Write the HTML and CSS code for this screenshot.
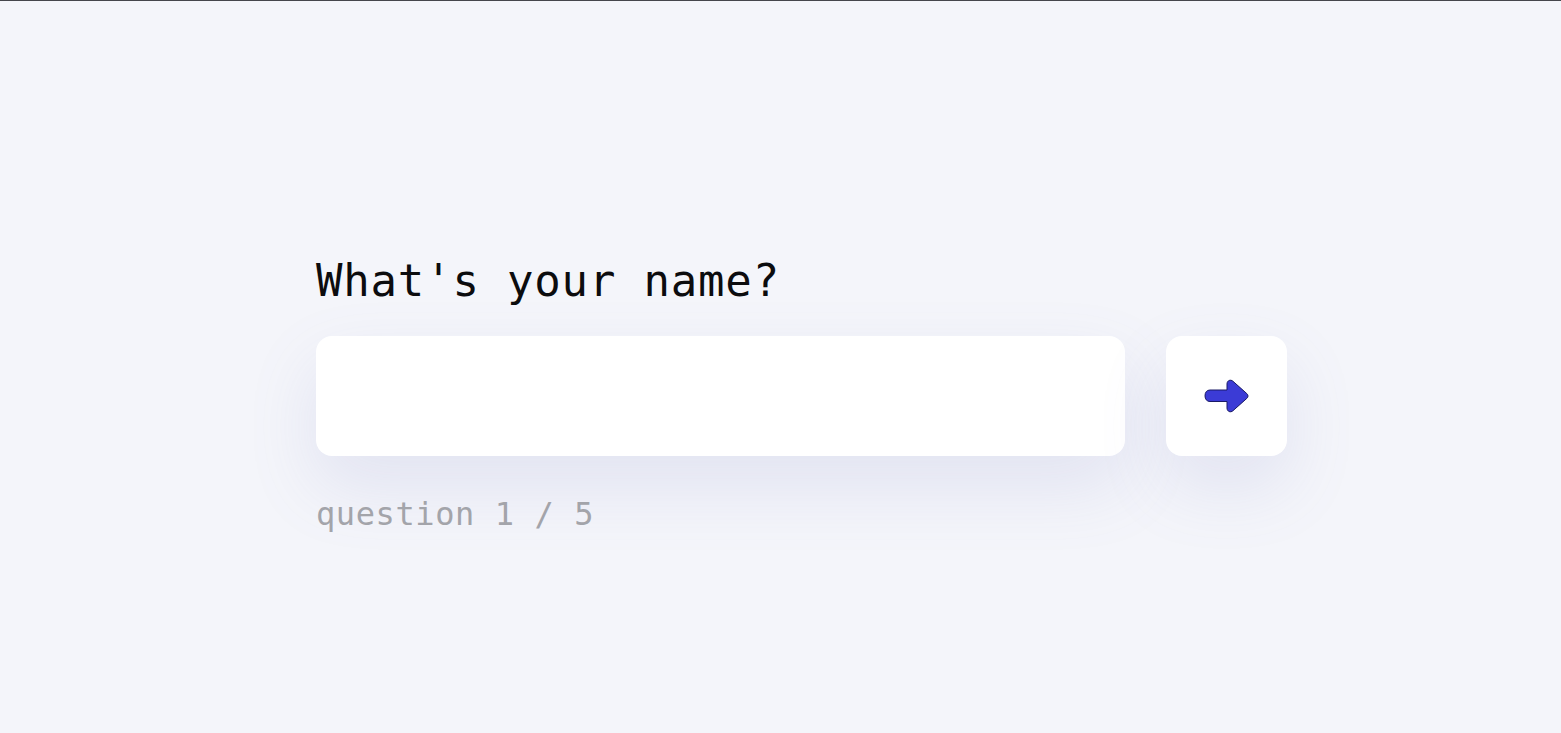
FILE: index.html
```html
<!DOCTYPE html>
<html>
<head>
<meta charset="utf-8">
<link rel="stylesheet" href="styles.css">
</head>
<body>
<main class="page">
  <section class="quiz">
    <h1 class="question">What's your name?</h1>
    <div class="row">
      <input class="answer" type="text" aria-label="answer">
      <button class="next" aria-label="next">
        <svg width="46" height="34" viewBox="0 0 46 34">
          <path d="M6 11 H23 V5 C23 1.5 26.5 0 29 2.3 L42.8 14.6 C44.4 16 44.4 18 42.8 19.4 L29 31.7 C26.5 34 23 32.5 23 29 V22.5 H6 C2.8 22.5 1 20.2 1 16.75 C1 13.3 2.8 11 6 11 Z" fill="#3b3bd6" stroke="#1a1a66" stroke-width="1"/>
        </svg>
      </button>
    </div>
    <p class="progress">question 1 / 5</p>
  </section>
</main>
</body>
</html>
```
FILE: styles.css
```css
html, body {
  margin: 0;
  padding: 0;
  height: 100%;
}
body {
  background: #f4f5fa;
  border-top: 1px solid #45464c;
  box-sizing: border-box;
  font-family: "DejaVu Sans Mono", "Liberation Mono", monospace;
}
.page {
  padding-left: 316px;
  padding-top: 250px;
}
.quiz {
  width: 971px;
}
.question {
  margin: 0;
  font-size: 44px;
  font-weight: normal;
  line-height: 60px;
  color: #0c0c0e;
  letter-spacing: 0.8px;
}
.row {
  display: flex;
  gap: 41px;
  margin-top: 25px;
}
.answer {
  flex: 0 0 809px;
  height: 120px;
  box-sizing: border-box;
  border: none;
  border-radius: 16px;
  background: #ffffff;
  outline: none;
  box-shadow: 0 30px 70px rgba(110, 118, 190, 0.14);
}
.next {
  flex: 0 0 121px;
  height: 120px;
  border: none;
  border-radius: 16px;
  background: #ffffff;
  display: flex;
  align-items: center;
  justify-content: center;
  padding: 0;
  box-shadow: 0 30px 70px rgba(110, 118, 190, 0.14);
}
.progress {
  margin: 38px 0 0;
  font-size: 32px;
  line-height: 40px;
  color: #a3a4aa;
  letter-spacing: 0.6px;
}
```
